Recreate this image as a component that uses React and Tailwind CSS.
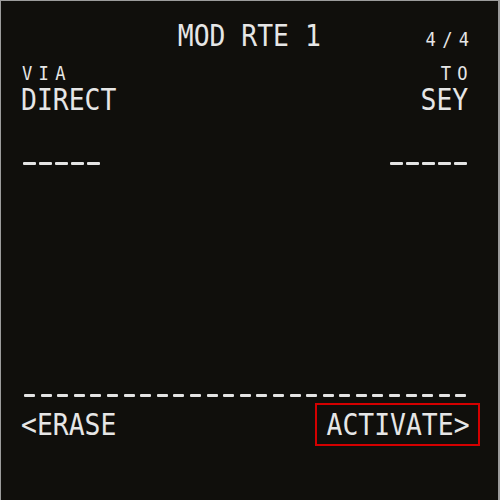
import React from 'react'

// one FMC character cell is ~16px wide; the glyphs are condensed with scale-x
function Big({ children, origin = 'origin-left' }) {
  return (
    <span className={`inline-block text-[30px] leading-none scale-x-[0.88] ${origin}`}>{children}</span>
  )
}

function Small({ children, origin = 'origin-left', className = '' }) {
  return (
    <span className={`inline-block text-[19px] leading-none tracking-[7px] scale-x-90 ${origin} ${className}`}>
      {children}
    </span>
  )
}

function Dashes({ count, width, gap }) {
  return (
    <div className="flex" style={{ gap }}>
      {Array.from({ length: count }).map((_, i) => (
        <div key={i} className="h-[3px] rounded-[1px] bg-[#e4e4e4]" style={{ width }} />
      ))}
    </div>
  )
}

export default function App() {
  return (
    <div className="w-[500px] h-[500px] bg-[#100f0c] border-t border-l border-r-2 border-[#9c9c9c] flex flex-col text-[#e6e6e6] font-['DejaVu_Sans_Mono',monospace]">
      {/* Title */}
      <div className="mt-[20px] flex items-baseline px-[20px]">
        <div className="flex-1" />
        <Big origin="origin-center">MOD RTE 1</Big>
        <div className="flex-1 flex justify-end">
          <Small origin="origin-right" className="mr-[3px]">4/4</Small>
        </div>
      </div>

      {/* Labels */}
      <div className="mt-[13px] flex justify-between pl-[21px] pr-[30px]">
        <Small>VIA</Small>
        <Small origin="origin-right" className="-mr-[6px]">TO</Small>
      </div>
      <div className="mt-[2px] flex justify-between pl-[20px] pr-[30px]">
        <Big>DIRECT</Big>
        <Big origin="origin-right">SEY</Big>
      </div>

      {/* Empty route line */}
      <div className="mt-[47px] flex justify-between pl-[22px] pr-[31px]">
        <Dashes count={5} width={13} gap={3} />
        <Dashes count={5} width={13} gap={3} />
      </div>

      {/* Separator */}
      <div className="mt-auto pl-[23px]">
        <Dashes count={27} width={11} gap={5.6} />
      </div>

      {/* Line select keys */}
      <div className="mt-[6px] mb-[54px] flex items-center justify-between pl-[20px] pr-[18px]">
        <Big>&lt;ERASE</Big>
        <div className="w-[165px] h-[43px] border-2 border-[#d40000] flex items-center justify-end pr-[8px]">
          <Big origin="origin-right">ACTIVATE&gt;</Big>
        </div>
      </div>
    </div>
  )
}
